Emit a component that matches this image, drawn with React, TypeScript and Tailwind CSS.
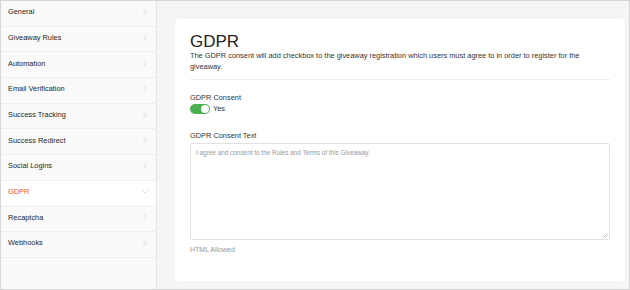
import { ChevronRight, ChevronDown } from "lucide-react";

const items = [
  "General",
  "Giveaway Rules",
  "Automation",
  "Email Verification",
  "Success Tracking",
  "Success Redirect",
  "Social Logins",
  "GDPR",
  "Recaptcha",
  "Webhooks",
];

export default function App() {
  return (
    <div
      className="w-[630px] h-[290px] flex border border-[#d6d6d6] bg-[#f5f5f5] text-[#222] overflow-hidden"
      style={{ fontFamily: '"Liberation Sans", Arial, sans-serif' }}
    >
      {/* Sidebar */}
      <div className="w-[156px] shrink-0 bg-[#fafafa] border-r border-[#e6e6e6]">
        {items.map((label) => {
          const active = label === "GDPR";
          return (
            <div
              key={label}
              className={`h-[25.7px] flex items-center justify-between pl-[7px] pr-[6px] pb-[3px] border-b border-[#efefef] text-[7.4px] ${
                active ? "bg-white text-[#e8542a]" : "text-[#1f1f1f]"
              }`}
            >
              <span>{label}</span>
              {active ? (
                <ChevronDown size={10} strokeWidth={1.5} className="text-[#c4c4c4]" />
              ) : (
                <ChevronRight size={10} strokeWidth={1.5} className="text-[#c4c4c4]" />
              )}
            </div>
          );
        })}
      </div>

      {/* Main */}
      <div className="flex-1 pl-[18px] pr-[4px] pt-[18px] pb-[8px]">
        <div className="h-full bg-white rounded-[4px] pl-[15px] pr-[15px] pt-[15px]">
          <h1 className="text-[17px] leading-[15px] text-[#222]">GDPR</h1>
          <p className="mt-[1px] text-[7.4px] leading-[11px] text-[#333] pb-[7px] border-b border-[#eeeeee]">
            The GDPR consent will add checkbox to the giveaway registration which users must agree to in order to register for the giveaway.
          </p>

          <div className="mt-[12px] text-[7.4px] text-[#333]">GDPR Consent</div>
          <div className="mt-0 flex items-center gap-[3px]">
            <div className="w-[20px] h-[10px] rounded-full bg-[#4caf50] flex items-center justify-end pr-[1px]">
              <div className="w-[8px] h-[8px] rounded-full bg-white" />
            </div>
            <span className="text-[7.4px] text-[#333]">Yes</span>
          </div>

          <div className="mt-[16px] text-[7.4px] text-[#333]">GDPR Consent Text</div>
          <div className="mt-[2px] h-[97px] border border-[#e2e2e2] rounded-[2px] px-[5px] pt-[4px] relative text-[6.4px] leading-[9px] text-[#9a9a9a]">
            I agree and consent to the Rules and Terms of this Giveaway.
            <svg
              className="absolute right-[1px] bottom-[1px]"
              width="5"
              height="5"
              viewBox="0 0 5 5"
            >
              <path d="M4.5 0.5 L0.5 4.5 M4.5 2.5 L2.5 4.5" stroke="#999" strokeWidth="0.6" />
            </svg>
          </div>
          <div className="mt-[5px] text-[7px] text-[#999]">HTML Allowed</div>
        </div>
      </div>
    </div>
  );
}
